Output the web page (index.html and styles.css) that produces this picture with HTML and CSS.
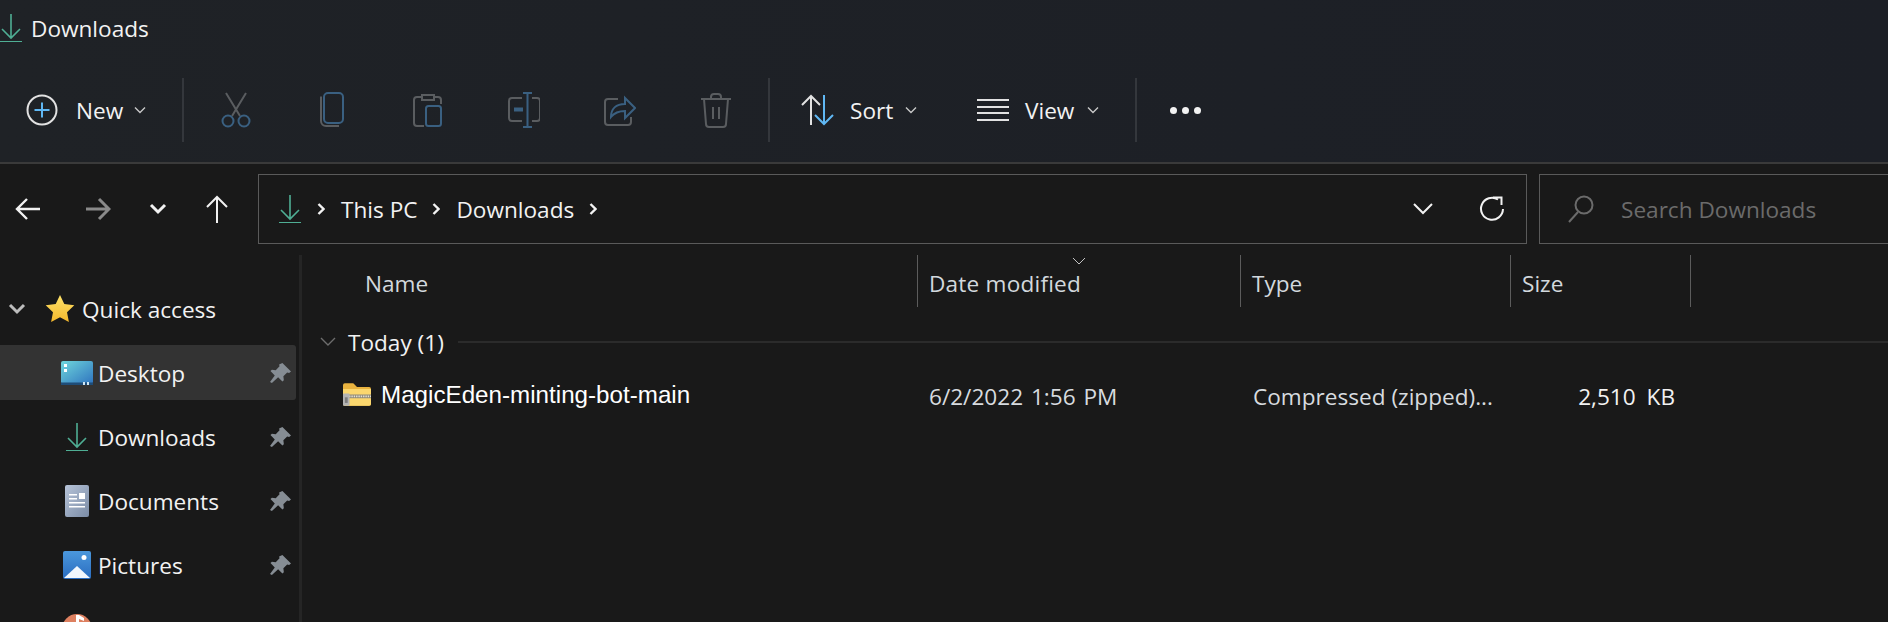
FILE: index.html
```html
<!DOCTYPE html>
<html lang="en">
<head>
    <meta charset="utf-8">
    <title>Downloads</title>
    <link rel="stylesheet" href="styles.css">
</head>
<body>
<div id="window">
    <div id="toolbar">
        <div class="titlebar">
            <svg class="title-icon" viewBox="0 0 22 28"><path d="M11 0V24M2 15l9 9 9-9" class="dl-arrow"/><path d="M0 28H22" class="dl-base"/></svg>
            <span>Downloads</span>
        </div>
        <div class="cmdbar">
            <div class="cmd cmd-new">
                <svg class="cmd-icon" viewBox="0 0 32 32"><ellipse cx="16" cy="16" rx="14.5" ry="14.5" class="ic-white"/><path d="M16 8.5V23.5M8.5 16H23.5" class="ic-blue-on"/></svg>
                <span>New</span>
                <svg class="chev" viewBox="0 0 12 8"><path d="M1 1.5l5 5 5-5"/></svg>
            </div>
            <div class="sep"></div>
            <div class="cmd-off">
                <svg viewBox="0 0 32 36"><path d="M6 1l14 23M26 1L12 24" class="ic-grey"/><circle cx="8" cy="29" r="5.5" class="ic-blue"/><circle cx="24" cy="29" r="5.5" class="ic-blue"/></svg>
            </div>
            <div class="cmd-off">
                <svg viewBox="0 0 32 36"><path d="M5 4.5V29a5 5 0 0 0 5 5h13" class="ic-grey"/><rect x="8" y="1" width="19" height="30" rx="4" class="ic-blue"/></svg>
            </div>
            <div class="cmd-off">
                <svg viewBox="0 0 32 36"><path d="M10 5H5a3 3 0 0 0-3 3v23a3 3 0 0 0 3 3h7M22 5h4a3 3 0 0 1 3 3v4M10 3h12v5H10z" class="ic-grey"/><rect x="14" y="14" width="15" height="20" rx="2.5" class="ic-blue"/></svg>
            </div>
            <div class="cmd-off">
                <svg viewBox="0 0 32 36"><path d="M14 6H4a3 3 0 0 0-3 3v17a3 3 0 0 0 3 3h10M24 6h5a3 3 0 0 1 3 3v17a3 3 0 0 1-3 3h-5" class="ic-grey"/><path d="M15 1h9M19.500 1V35M15 35h9" class="ic-blue"/><path d="M6 17.500h9" class="ic-blue-thick"/></svg>
            </div>
            <div class="cmd-off">
                <svg viewBox="0 0 32 36"><path d="M14 7H4a3 3 0 0 0-3 3v20a3 3 0 0 0 3 3h20a3 3 0 0 0 3-3v-5" class="ic-grey"/><path d="M7 25c0-8 5-13 14-13V6l10 10-10 10v-7c-6 0-10 1-14 6z" class="ic-blue"/></svg>
            </div>
            <div class="cmd-off">
                <svg viewBox="0 0 32 36"><path d="M1 7H31M11 7V5a3 3 0 0 1 3-3h4a3 3 0 0 1 3 3v2M4 7l2 25a3 3 0 0 0 3 3h14a3 3 0 0 0 3-3l2-25M13 15V27M19 15V27" class="ic-grey"/></svg>
            </div>
            <div class="sep sep-after-off"></div>
            <div class="cmd cmd-sort">
                <svg class="cmd-icon" viewBox="0 0 36 32"><path d="M11 31V2M2 11l9-9 9 9" class="ic-white"/><path d="M24 1V30M15 21l9 9 9-9" class="ic-blue-on"/></svg>
                <span>Sort</span>
                <svg class="chev" viewBox="0 0 12 8"><path d="M1 1.5l5 5 5-5"/></svg>
            </div>
            <div class="cmd cmd-view">
                <svg class="cmd-icon" viewBox="0 0 32 24"><path d="M0 2H32M0 9H32M0 15H32M0 22H32" class="ic-white"/></svg>
                <span>View</span>
                <svg class="chev" viewBox="0 0 12 8"><path d="M1 1.5l5 5 5-5"/></svg>
            </div>
            <div class="sep"></div>
            <div class="more"><i></i><i></i><i></i></div>
        </div>
    </div>

    <div class="navbar">
        <div class="nav-btn nav-back"><svg viewBox="0 0 26 24"><path d="M25 12H2M12 2L2 12l10 10"/></svg></div>
        <div class="nav-btn nav-fwd"><svg viewBox="0 0 26 24"><path d="M1 12H24M14 2l10 10-10 10"/></svg></div>
        <div class="nav-btn nav-hist"><svg viewBox="0 0 18 12"><path d="M2 2l7 7 7-7"/></svg></div>
        <div class="nav-btn nav-up"><svg viewBox="0 0 24 28"><path d="M12 28V2M2 12L12 2l10 10"/></svg></div>
        <div class="address">
            <svg class="addr-icon" viewBox="0 0 22 28"><path d="M11 0V24M2 15l9 9 9-9" class="dl-arrow"/><path d="M0 28H22" class="dl-base"/></svg>
            <svg class="crumb-sep" viewBox="0 0 8 12"><path d="M1.500 1l5 5-5 5"/></svg>
            <span>This PC</span>
            <svg class="crumb-sep" viewBox="0 0 8 12"><path d="M1.500 1l5 5-5 5"/></svg>
            <span>Downloads</span>
            <svg class="crumb-sep" viewBox="0 0 8 12"><path d="M1.500 1l5 5-5 5"/></svg>
            <svg class="addr-drop" viewBox="0 0 20 12"><path d="M1 1l9 9 9-9"/></svg>
            <svg class="addr-refresh" viewBox="0 0 26 26"><path d="M19 3.500A11 11 0 1 0 24 13"/><path d="M14 1.500h8.500V9"/></svg>
        </div>
        <div class="search">
            <svg viewBox="0 0 26 28"><circle cx="16" cy="10" r="8.500"/><path d="M10 17L1 27"/></svg>
            <span>Search Downloads</span>
        </div>
    </div>

    <div class="main">
        <div class="sidebar">
            <div class="side-row side-head">
                <svg class="side-chev" viewBox="0 0 18 12"><path d="M2 2l7 7 7-7"/></svg>
                <svg class="star" viewBox="0 0 30 30"><defs><linearGradient id="starfill" x1="0" y1="0" x2="0" y2="1"><stop offset="0" stop-color="#fde26a"/><stop offset="1" stop-color="#f6b92c"/></linearGradient></defs><path d="M15 1l4.300 9 10 1.300-7.300 6.900 1.900 9.800L15 23.200 6.100 28l1.900-9.800L.7 11.300l10-1.300z" fill="url(#starfill)"/></svg>
                <span>Quick access</span>
            </div>
            <div class="side-row side-active">
                <span class="side-ic">
                    <svg viewBox="0 0 32 24"><defs><linearGradient id="deskfill" x1="0" y1="0" x2="1" y2="1"><stop offset="0" stop-color="#6fd6dc"/><stop offset="1" stop-color="#2f74bf"/></linearGradient></defs><rect width="32" height="23" rx="2" fill="url(#deskfill)"/><rect y="21.500" width="32" height="2.500" fill="#1f4d78"/><rect x="3" y="3" width="3" height="3" fill="#fff"/><rect x="3" y="8" width="3" height="3" fill="#fff"/><rect x="22" y="21" width="2" height="3" fill="#cfe6f5"/><rect x="26" y="21" width="2" height="3" fill="#cfe6f5"/></svg>
                </span>
                <span>Desktop</span>
                <svg class="pin" viewBox="0 0 22 22"><path d="M13 0l9 9-2 1.500-2-.5-4 4 .5 4-1.500 1.500-4.500-4.500L2 21 0 20l5-7-4.500-4.500L2 7l4 .5 4-4-.5-2z"/></svg>
            </div>
            <div class="side-row">
                <span class="side-ic">
                    <svg class="dl" viewBox="0 0 22 28"><path d="M11 0V24M2 15l9 9 9-9" class="dl-arrow"/><path d="M0 28H22" class="dl-base"/></svg>
                </span>
                <span>Downloads</span>
                <svg class="pin" viewBox="0 0 22 22"><path d="M13 0l9 9-2 1.500-2-.5-4 4 .5 4-1.500 1.500-4.500-4.500L2 21 0 20l5-7-4.500-4.500L2 7l4 .5 4-4-.5-2z"/></svg>
            </div>
            <div class="side-row">
                <span class="side-ic">
                    <svg class="doc" viewBox="0 0 24 32"><defs><linearGradient id="docfill" x1="0" y1="0" x2="1" y2="1"><stop offset="0" stop-color="#b6c3d8"/><stop offset="1" stop-color="#7b8ca6"/></linearGradient></defs><rect width="24" height="32" rx="2" fill="url(#docfill)"/><path d="M4 9h8v1.500H4zM4 13h8v1.500H4zM4 17h16v1.500H4zM4 21h16v1.500H4z" fill="#fff"/><rect x="14" y="8" width="6" height="6" fill="#fff"/></svg>
                </span>
                <span>Documents</span>
                <svg class="pin" viewBox="0 0 22 22"><path d="M13 0l9 9-2 1.500-2-.5-4 4 .5 4-1.500 1.500-4.500-4.500L2 21 0 20l5-7-4.500-4.500L2 7l4 .5 4-4-.5-2z"/></svg>
            </div>
            <div class="side-row">
                <span class="side-ic">
                    <svg class="pic" viewBox="0 0 28 28"><defs><linearGradient id="picfill" x1="0" y1="0" x2="0" y2="1"><stop offset="0" stop-color="#4b98dc"/><stop offset="1" stop-color="#2a6cc0"/></linearGradient></defs><rect width="28" height="28" rx="2" fill="url(#picfill)"/><circle cx="21" cy="6.500" r="2.500" fill="#fff"/><path d="M1 27L14 15l13 12z" fill="#f2f7fd"/></svg>
                </span>
                <span>Pictures</span>
                <svg class="pin" viewBox="0 0 22 22"><path d="M13 0l9 9-2 1.500-2-.5-4 4 .5 4-1.500 1.500-4.500-4.500L2 21 0 20l5-7-4.500-4.500L2 7l4 .5 4-4-.5-2z"/></svg>
            </div>
            <div class="side-row">
                <span class="side-ic">
                    <svg class="music" viewBox="0 0 30 30"><circle cx="15" cy="15" r="15" fill="#dd8060"/><path d="M14 1h3l5 3v3l-5-2v12h-3z" fill="#fff"/></svg>
                </span>
                <span>Music</span>
            </div>
        </div>

        <div class="list">
            <div class="columns list-head">
                <div class="col col-name">Name</div>
                <div class="col">Date modified</div>
                <div class="col">Type</div>
                <div class="col">Size</div>
                <svg class="sort-mark" viewBox="0 0 14 8"><path d="M1 1l6 6 6-6"/></svg>
            </div>
            <div class="group">
                <svg viewBox="0 0 16 10"><path d="M1 1l7 7 7-7"/></svg>
                <span>Today (1)</span>
                <div class="group-line"></div>
            </div>
            <div class="columns file-row">
                <div class="file-name">
                    <svg viewBox="0 0 30 24"><path d="M2 0h9l4 4h13a2 2 0 0 1 2 2v16a2 2 0 0 1-2 2H2a2 2 0 0 1-2-2V2a2 2 0 0 1 2-2z" fill="#e9b33f"/><path d="M0 6h30v16a2 2 0 0 1-2 2H2a2 2 0 0 1-2-2z" fill="#fbd76e"/><rect y="12" width="30" height="4" fill="#8f8a78"/><path d="M4 14H30" stroke="#e6e2d2" stroke-width="2" stroke-dasharray="1.500 1"/><rect y="11" width="7" height="13" rx="1" fill="#b4b4b4"/><rect x="2" y="15" width="3" height="6" fill="#7c7c7c"/></svg>
                    <span>MagicEden-minting-bot-main</span>
                </div>
                <div class="cell cell-date">6/2/2022 1:56 PM</div>
                <div class="cell">Compressed (zipped)...</div>
                <div class="cell cell-size">2,510 KB</div>
            </div>
        </div>
    </div>
</div>
</body>
</html>
```

FILE: styles.css
```css
* {
    box-sizing: border-box;
}

html, body {
    margin: 0;
    height: 100%;
    overflow: hidden;
    background-color: #191919;
}

body {
    font-family: "Open Sans", "Noto Sans", sans-serif;
    font-size: 22.6px;
    color: #f2f2f2;
}

svg {
    display: block;
    fill: none;
    flex-shrink: 0;
}

#window {
    width: 1888px;
    height: 622px;
    overflow: hidden;
}

/* top band */
#toolbar {
    height: 164px;
    background: linear-gradient(90deg, #1f2226, #1c1f26);
    border-bottom: 2px solid #3a3a3a;
}

.titlebar {
    height: 56px;
    display: flex;
    align-items: center;
    gap: 9px;
}

.title-icon {
    width: 22px;
    height: 28px;
}

.dl-arrow, .dl-base {
    stroke: #4fae94;
    stroke-width: 1.6;
}

.dl-base {
    stroke-width: 2;
}

.cmdbar {
    height: 64px;
    margin-top: 22px;
    padding-left: 26px;
    display: flex;
    align-items: center;
}

.cmd {
    display: flex;
    align-items: center;
    flex-shrink: 0;
}

.cmd-icon {
    width: 32px;
    height: 32px;
}

.cmd-new {
    width: 156px;
}

.cmd-new span {
    margin-left: 18px;
}

.cmd-new .chev {
    margin-left: 11px;
}

.cmd-sort {
    width: 207px;
    padding-left: 30px;
}

.cmd-sort .cmd-icon {
    width: 36px;
}

.cmd-sort span {
    margin-left: 14px;
}

.cmd-sort .chev {
    margin-left: 12px;
}

.cmd-view {
    width: 158px;
}

.cmd-view .cmd-icon {
    height: 24px;
}

.cmd-view span {
    margin-left: 16px;
}

.cmd-view .chev {
    margin-left: 13px;
}

.chev {
    width: 12px;
    height: 8px;
}

.chev path {
    stroke: #c8c8c8;
    stroke-width: 1.4;
}

.sep {
    width: 2px;
    height: 64px;
    background-color: #34373c;
    flex-shrink: 0;
}

.sep-after-off {
    margin-left: 4px;
}

.cmd-off {
    width: 96px;
    display: flex;
    justify-content: center;
    flex-shrink: 0;
}

.cmd-off svg {
    width: 32px;
    height: 36px;
}

.sep + .cmd-off {
    margin-left: 4px;
}

.ic-white, .ic-grey, .ic-blue, .ic-blue-on, .ic-blue-thick {
    stroke-width: 2;
}

.ic-white {
    stroke: #e2e2e2;
}

.ic-blue-on {
    stroke: #60b8f4;
}

.ic-grey {
    stroke: #5a5d60;
}

.ic-blue {
    stroke: #3a6081;
}

.ic-blue-thick {
    stroke: #3a6081;
    stroke-width: 4;
}

.more {
    margin-left: 33px;
    display: flex;
    gap: 5px;
}

.more i {
    display: block;
    width: 7px;
    height: 7px;
    border-radius: 50%;
    background-color: #f2f2f2;
}

/* address row */
.navbar {
    height: 81px;
    padding-top: 10px;
    display: flex;
}

.nav-btn {
    height: 70px;
    display: flex;
    align-items: center;
    justify-content: center;
    flex-shrink: 0;
}

.nav-btn svg {
    stroke: #f2f2f2;
    stroke-width: 2.400;
}

.nav-btn path {
    stroke: inherit;
}

.nav-back {
    width: 56px;
}

.nav-back svg, .nav-fwd svg {
    width: 26px;
    height: 24px;
}

.nav-fwd {
    width: 84px;
}

.nav-fwd svg {
    stroke: #8a8a8a;
    stroke-width: 3;
}

.nav-hist {
    width: 36px;
}

.nav-hist svg {
    width: 18px;
    height: 12px;
    stroke-width: 3;
}

.nav-up {
    width: 82px;
}

.nav-up svg {
    width: 24px;
    height: 28px;
    stroke-width: 2;
}

.address {
    width: 1269px;
    height: 70px;
    flex-shrink: 0;
    border: 1px solid #5a5a5a;
    padding-left: 20px;
    display: flex;
    align-items: center;
}

.addr-icon {
    width: 22px;
    height: 28px;
    margin-right: 16px;
}

.crumb-sep {
    width: 8px;
    height: 12px;
    stroke: #f2f2f2;
    stroke-width: 2.400;
}

.crumb-sep path {
    stroke: inherit;
}

.address span {
    margin: 0 15px 0 16px;
}

.addr-drop {
    width: 20px;
    height: 12px;
    margin-left: auto;
    stroke: #f2f2f2;
    stroke-width: 2;
}

.addr-refresh {
    width: 26px;
    height: 26px;
    margin: 0 21px 0 46px;
    stroke: #f2f2f2;
    stroke-width: 2;
}

.search {
    width: 420px;
    height: 70px;
    margin-left: 12px;
    flex-shrink: 0;
    border: 1px solid #5a5a5a;
    padding-left: 28px;
    display: flex;
    align-items: center;
    gap: 27px;
    color: #6b6b6b;
}

.search svg {
    width: 26px;
    height: 28px;
    stroke: #6b6b6b;
    stroke-width: 2;
}

/* lower panes */
.main {
    margin-top: 10px;
    display: flex;
    height: 367px;
}

.sidebar {
    width: 302px;
    padding-top: 22px;
    border-right: 3px solid #252525;
    flex-shrink: 0;
}

.side-row {
    height: 64px;
    padding-left: 98px;
    display: flex;
    align-items: center;
    position: relative;
}

.side-head {
    padding-left: 0;
}

.side-chev {
    width: 18px;
    height: 12px;
    margin-left: 8px;
    stroke: #bdbdbd;
    stroke-width: 3;
}

.side-chev path {
    stroke: inherit;
}

.star {
    width: 30px;
    height: 30px;
    margin: 0 7px 0 19px;
}

.side-active::before {
    content: "";
    position: absolute;
    left: 0;
    right: 3px;
    top: 4px;
    bottom: 5px;
    background-color: #333333;
    border-radius: 0 3px 3px 0;
}

.side-row > * {
    position: relative;
}

.side-ic {
    position: absolute !important;
    left: 60px;
    width: 34px;
    top: 0;
    height: 100%;
    display: flex;
    align-items: center;
    justify-content: center;
}

.side-ic svg {
    width: 32px;
    height: 24px;
}

.side-ic .dl {
    width: 22px;
    height: 28px;
}

.side-ic .doc {
    width: 24px;
    height: 32px;
}

.side-ic .pic {
    width: 28px;
    height: 28px;
}

.side-ic .music {
    width: 30px;
    height: 30px;
}

.pin {
    width: 21px;
    height: 21px;
    margin-left: auto;
    margin-right: 8px;
    fill: #868d94;
}

.list {
    flex: 1;
}

.columns {
    display: grid;
    grid-template-columns: 616px 323px 270px 180px;
}

.list-head {
    height: 52px;
    position: relative;
    color: #d2d8dd;
}

.col {
    border-right: 1px solid #5c5c5c;
    padding-left: 11px;
    padding-top: 4px;
    display: flex;
    align-items: center;
}

.col:nth-child(2) {
    letter-spacing: 0.2px;
}

.col-name {
    padding-left: 63px;
}

.sort-mark {
    position: absolute;
    left: 770px;
    top: 2px;
    width: 14px;
    height: 8px;
    stroke: #c4c4c4;
}

.sort-mark path {
    stroke: inherit;
}

.group {
    height: 70px;
    display: flex;
    align-items: center;
    padding-left: 18px;
}

.group svg {
    width: 16px;
    height: 10px;
    margin-right: 12px;
    stroke: #6d6d6d;
    stroke-width: 1.400;
}

.group svg path {
    stroke: inherit;
}

.group-line {
    flex: 1;
    height: 2px;
    margin-left: 14px;
    background-color: #2b2b2b;
}

.file-row {
    height: 34px;
    align-items: center;
}

.file-name {
    padding-left: 41px;
    display: flex;
    align-items: center;
    gap: 10px;
    font-family: "Liberation Sans", Arial, sans-serif;
    font-size: 24.2px;
    color: #ffffff;
}

.file-name svg {
    width: 28px;
    height: 23px;
}

.cell {
    padding-left: 12px;
    padding-top: 4px;
    color: #d7dbdf;
}

.cell-date {
    padding-left: 11px;
    word-spacing: 2px;
}

.cell-size {
    padding-right: 16px;
    text-align: right;
    word-spacing: 5px;
    color: #f2f2f2;
}
```
